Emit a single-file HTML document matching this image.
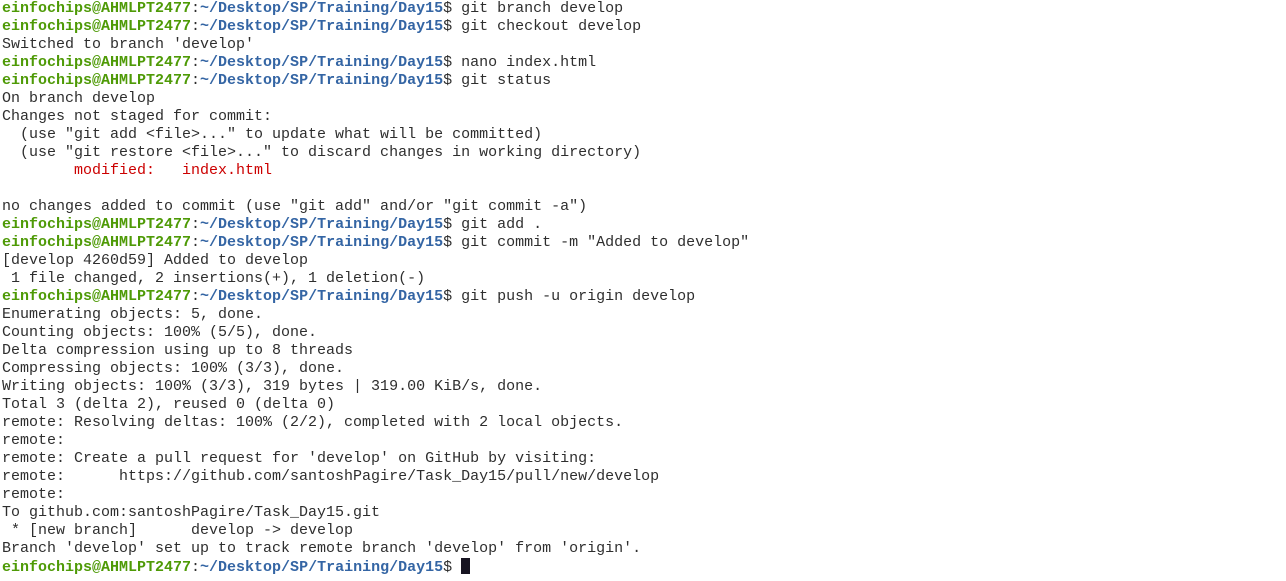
<!DOCTYPE html>
<html><head><style>
body{margin:0;background:#fff;width:1286px;height:581px;overflow:hidden}
pre{margin:0;padding:0 0 0 2px;font-family:"Liberation Mono",monospace;font-size:15px;line-height:18px;color:#2e2e2e;letter-spacing:0}
.g{color:#4e9a06;font-weight:bold}.b{color:#3465a4;font-weight:bold}.r{color:#cc0000}
.c{display:inline-block;width:9px;height:16px;background:#171421;vertical-align:-3px}
</style></head><body><pre><span class="g">einfochips@AHMLPT2477</span>:<span class="b">~/Desktop/SP/Training/Day15</span>$ git branch develop
<span class="g">einfochips@AHMLPT2477</span>:<span class="b">~/Desktop/SP/Training/Day15</span>$ git checkout develop
Switched to branch 'develop'
<span class="g">einfochips@AHMLPT2477</span>:<span class="b">~/Desktop/SP/Training/Day15</span>$ nano index.html
<span class="g">einfochips@AHMLPT2477</span>:<span class="b">~/Desktop/SP/Training/Day15</span>$ git status
On branch develop
Changes not staged for commit:
  (use "git add &lt;file&gt;..." to update what will be committed)
  (use "git restore &lt;file&gt;..." to discard changes in working directory)
        <span class="r">modified:   index.html</span>

no changes added to commit (use "git add" and/or "git commit -a")
<span class="g">einfochips@AHMLPT2477</span>:<span class="b">~/Desktop/SP/Training/Day15</span>$ git add .
<span class="g">einfochips@AHMLPT2477</span>:<span class="b">~/Desktop/SP/Training/Day15</span>$ git commit -m "Added to develop"
[develop 4260d59] Added to develop
 1 file changed, 2 insertions(+), 1 deletion(-)
<span class="g">einfochips@AHMLPT2477</span>:<span class="b">~/Desktop/SP/Training/Day15</span>$ git push -u origin develop
Enumerating objects: 5, done.
Counting objects: 100% (5/5), done.
Delta compression using up to 8 threads
Compressing objects: 100% (3/3), done.
Writing objects: 100% (3/3), 319 bytes | 319.00 KiB/s, done.
Total 3 (delta 2), reused 0 (delta 0)
remote: Resolving deltas: 100% (2/2), completed with 2 local objects.
remote: 
remote: Create a pull request for 'develop' on GitHub by visiting:
remote:      https://github.com/santoshPagire/Task_Day15/pull/new/develop
remote: 
To github.com:santoshPagire/Task_Day15.git
 * [new branch]      develop -&gt; develop
Branch 'develop' set up to track remote branch 'develop' from 'origin'.
<span class="g">einfochips@AHMLPT2477</span>:<span class="b">~/Desktop/SP/Training/Day15</span>$ <span class="c"></span></pre></body></html>
